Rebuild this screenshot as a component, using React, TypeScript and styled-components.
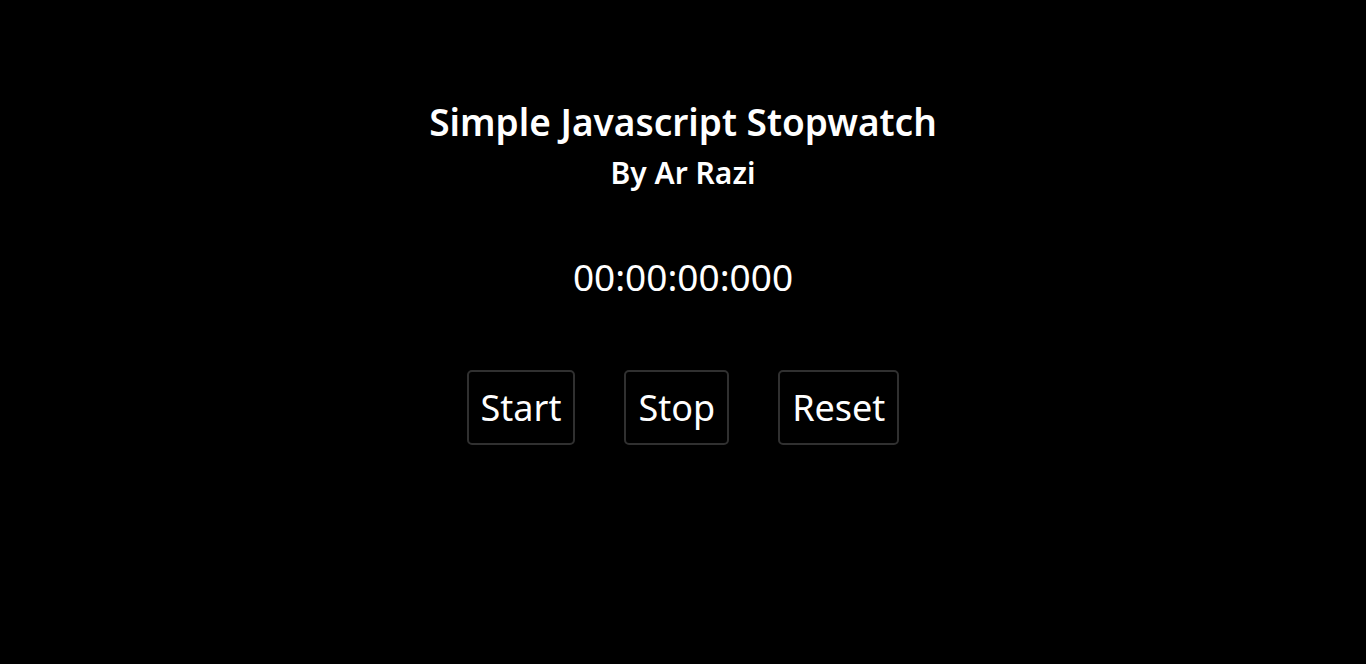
import React from "react";
import styled, { createGlobalStyle } from "styled-components";

const Global = createGlobalStyle`
  html, body { margin: 0; padding: 0; background: #000; }
  body { font-family: "Noto Sans", "Open Sans", sans-serif; color: #fff; }
`;

const Page = styled.main`
  min-height: 664px;
  display: flex;
  flex-direction: column;
  align-items: center;
  padding-top: 99px;
  box-sizing: border-box;
`;

const Title = styled.h1`
  margin: 0;
  font-size: 37px;
  font-weight: 600;
  line-height: 46px;
`;

const Subtitle = styled.h2`
  margin: 10px 0 0;
  font-size: 30px;
  font-weight: 600;
  line-height: 36px;
`;

const Timer = styled.div`
  margin-top: 62px;
  font-size: 37px;
  font-weight: 400;
  line-height: 48px;
`;

const Controls = styled.div`
  margin-top: 69px;
  display: flex;
  gap: 49px;
`;

const Button = styled.button`
  background: #000;
  color: #fff;
  border: 2px solid #303030;
  border-radius: 5px;
  font-family: inherit;
  font-size: 36px;
  padding: 0 12px;
  height: 75px;
  cursor: pointer;
`;

export default function App() {
  return (
    <>
      <Global />
      <Page>
        <Title>Simple Javascript Stopwatch</Title>
        <Subtitle>By Ar Razi</Subtitle>
        <Timer>00:00:00:000</Timer>
        <Controls>
          <Button>Start</Button>
          <Button>Stop</Button>
          <Button>Reset</Button>
        </Controls>
      </Page>
    </>
  );
}
